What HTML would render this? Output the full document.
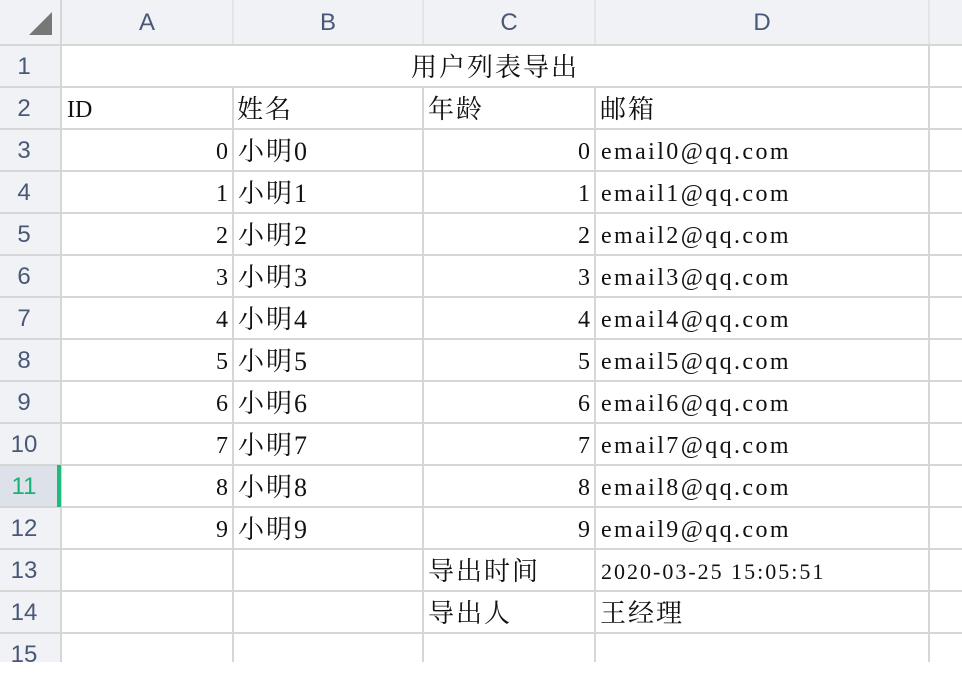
<!DOCTYPE html><html><head><meta charset="utf-8"><style>
*{margin:0;padding:0;box-sizing:border-box}
body{width:962px;height:662px;overflow:hidden;background:#fff;position:relative;font-family:"Liberation Serif","Noto Serif CJK SC",serif;color:#111}
.a{position:absolute}
.hl{position:absolute;height:2px;background:#d6d6d6;left:0;width:962px}
.vl{position:absolute;width:2px;background:#d6d6d6}
.ch{position:absolute;top:0;height:45px;line-height:45px;text-align:center;font-family:"Liberation Sans",sans-serif;font-size:24px;color:#4a5878}
.rh{position:absolute;left:0;width:48px;height:42px;line-height:44px;text-align:center;font-family:"Liberation Sans",sans-serif;font-size:24px;color:#4a5878}
.c{position:absolute;height:42px;line-height:46px;font-size:24px;white-space:nowrap}
.k{font-size:26px;letter-spacing:2px}
.r{text-align:right}
.e{letter-spacing:2.4px}
</style></head><body>
<div class="a" style="left:0;top:0;width:962px;height:45px;background:#f0f2f6"></div>
<div class="a" style="left:0;top:45px;width:60px;height:617px;background:#f0f2f6"></div>
<div class="a" style="left:0;top:465px;width:60px;height:42px;background:#dde1e9"></div>
<svg class="a" style="left:28px;top:12px" width="24" height="24"><polygon points="24,0 24,23 1,23" fill="#777"/></svg>
<div class="ch" style="left:61px;width:172px">A</div>
<div class="ch" style="left:233px;width:190px">B</div>
<div class="ch" style="left:423px;width:172px">C</div>
<div class="ch" style="left:595px;width:334px">D</div>
<div class="vl" style="left:60px;top:0;height:662px"></div>
<div class="vl" style="left:232px;top:0;height:45px;background:#e2e4e8"></div>
<div class="vl" style="left:422px;top:0;height:45px;background:#e2e4e8"></div>
<div class="vl" style="left:594px;top:0;height:45px;background:#e2e4e8"></div>
<div class="vl" style="left:928px;top:0;height:45px;background:#e2e4e8"></div>
<div class="vl" style="left:232px;top:87px;height:575px"></div>
<div class="vl" style="left:422px;top:87px;height:575px"></div>
<div class="vl" style="left:594px;top:87px;height:575px"></div>
<div class="vl" style="left:928px;top:45px;height:617px"></div>
<div class="hl" style="top:44px"></div>
<div class="hl" style="top:86px"></div><div class="hl" style="top:128px"></div>
<div class="hl" style="top:170px"></div><div class="hl" style="top:212px"></div>
<div class="hl" style="top:254px"></div><div class="hl" style="top:296px"></div>
<div class="hl" style="top:338px"></div><div class="hl" style="top:380px"></div>
<div class="hl" style="top:422px"></div><div class="hl" style="top:464px"></div>
<div class="hl" style="top:506px"></div><div class="hl" style="top:548px"></div>
<div class="hl" style="top:590px"></div><div class="hl" style="top:632px"></div>
<div class="a" style="left:57px;top:465px;width:4px;height:42px;background:#1fbb7d"></div>
<div class="rh" style="top:45px">1</div><div class="rh" style="top:87px">2</div>
<div class="rh" style="top:129px">3</div><div class="rh" style="top:171px">4</div>
<div class="rh" style="top:213px">5</div><div class="rh" style="top:255px">6</div>
<div class="rh" style="top:297px">7</div><div class="rh" style="top:339px">8</div>
<div class="rh" style="top:381px">9</div><div class="rh" style="top:423px">10</div>
<div class="rh" style="top:465px;color:#17b374">11</div><div class="rh" style="top:507px">12</div>
<div class="rh" style="top:549px">13</div><div class="rh" style="top:591px">14</div>
<div class="rh" style="top:633px">15</div>
<div class="c k" style="left:61px;width:868px;top:45px;text-align:center">用户列表导出</div>
<div class="c" style="left:67px;top:87px">ID</div>
<div class="c k" style="left:237px;top:87px">姓名</div>
<div class="c k" style="left:428px;top:87px">年龄</div>
<div class="c k" style="left:600px;top:87px">邮箱</div>

<div class="c r" style="left:61px;width:167px;top:129px">0</div><div class="c k" style="left:238px;top:129px">小明0</div><div class="c r" style="left:423px;width:167px;top:129px">0</div><div class="c e" style="left:601px;top:129px">email0@qq.com</div>
<div class="c r" style="left:61px;width:167px;top:171px">1</div><div class="c k" style="left:238px;top:171px">小明1</div><div class="c r" style="left:423px;width:167px;top:171px">1</div><div class="c e" style="left:601px;top:171px">email1@qq.com</div>
<div class="c r" style="left:61px;width:167px;top:213px">2</div><div class="c k" style="left:238px;top:213px">小明2</div><div class="c r" style="left:423px;width:167px;top:213px">2</div><div class="c e" style="left:601px;top:213px">email2@qq.com</div>
<div class="c r" style="left:61px;width:167px;top:255px">3</div><div class="c k" style="left:238px;top:255px">小明3</div><div class="c r" style="left:423px;width:167px;top:255px">3</div><div class="c e" style="left:601px;top:255px">email3@qq.com</div>
<div class="c r" style="left:61px;width:167px;top:297px">4</div><div class="c k" style="left:238px;top:297px">小明4</div><div class="c r" style="left:423px;width:167px;top:297px">4</div><div class="c e" style="left:601px;top:297px">email4@qq.com</div>
<div class="c r" style="left:61px;width:167px;top:339px">5</div><div class="c k" style="left:238px;top:339px">小明5</div><div class="c r" style="left:423px;width:167px;top:339px">5</div><div class="c e" style="left:601px;top:339px">email5@qq.com</div>
<div class="c r" style="left:61px;width:167px;top:381px">6</div><div class="c k" style="left:238px;top:381px">小明6</div><div class="c r" style="left:423px;width:167px;top:381px">6</div><div class="c e" style="left:601px;top:381px">email6@qq.com</div>
<div class="c r" style="left:61px;width:167px;top:423px">7</div><div class="c k" style="left:238px;top:423px">小明7</div><div class="c r" style="left:423px;width:167px;top:423px">7</div><div class="c e" style="left:601px;top:423px">email7@qq.com</div>
<div class="c r" style="left:61px;width:167px;top:465px">8</div><div class="c k" style="left:238px;top:465px">小明8</div><div class="c r" style="left:423px;width:167px;top:465px">8</div><div class="c e" style="left:601px;top:465px">email8@qq.com</div>
<div class="c r" style="left:61px;width:167px;top:507px">9</div><div class="c k" style="left:238px;top:507px">小明9</div><div class="c r" style="left:423px;width:167px;top:507px">9</div><div class="c e" style="left:601px;top:507px">email9@qq.com</div>
<div class="c k" style="left:428px;top:549px">导出时间</div><div class="c" style="left:601px;top:549px;font-size:22px;letter-spacing:2px">2020-03-25 15:05:51</div>
<div class="c k" style="left:428px;top:591px">导出人</div><div class="c k" style="left:600px;top:591px">王经理</div>
</body></html>
